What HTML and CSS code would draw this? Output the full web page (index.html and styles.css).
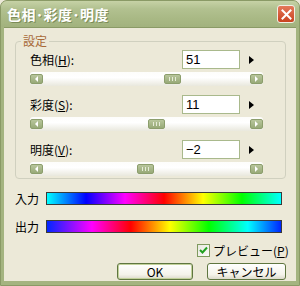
FILE: index.html
```html
<!DOCTYPE html>
<html lang="ja">
<head>
    <meta charset="UTF-8">
    <title>色相･彩度･明度</title>
    <link rel="stylesheet" href="styles.css">
</head>
<body>
<div class="window">
    <div class="titlebar">
        <span class="title">色相･彩度･明度</span>
        <span class="close-btn">
            <svg width="11" height="11" viewBox="0 0 11 11"><path d="M1.5 1.5 L9.5 9.5 M9.5 1.5 L1.5 9.5" stroke="#fff" stroke-width="2" stroke-linecap="square"/></svg>
        </span>
    </div>
    <div class="client">
        <fieldset class="group">
            <legend>設定</legend>

            <div class="setting">
                <div class="setting-row">
                    <span class="setting-label">色相(<u>H</u>):</span>
                    <input class="value" type="text" value="51">
                    <span class="spin-arrow"></span>
                </div>
                <div class="slider">
                    <span class="sl-btn sl-left"></span>
                    <span class="sl-thumb" style="left: 134px"></span>
                    <span class="sl-btn sl-right"></span>
                </div>
            </div>

            <div class="setting">
                <div class="setting-row">
                    <span class="setting-label">彩度(<u>S</u>):</span>
                    <input class="value" type="text" value="11">
                    <span class="spin-arrow"></span>
                </div>
                <div class="slider">
                    <span class="sl-btn sl-left"></span>
                    <span class="sl-thumb" style="left: 118px"></span>
                    <span class="sl-btn sl-right"></span>
                </div>
            </div>

            <div class="setting">
                <div class="setting-row">
                    <span class="setting-label">明度(<u>V</u>):</span>
                    <input class="value" type="text" value="−2">
                    <span class="spin-arrow"></span>
                </div>
                <div class="slider">
                    <span class="sl-btn sl-left"></span>
                    <span class="sl-thumb" style="left: 107px"></span>
                    <span class="sl-btn sl-right"></span>
                </div>
            </div>
        </fieldset>

        <div class="hue-row">
            <span class="hue-label">入力</span>
            <div class="hue-bar hue-in"></div>
        </div>
        <div class="hue-row">
            <span class="hue-label">出力</span>
            <div class="hue-bar hue-out"></div>
        </div>

        <label class="check-row">
            <span class="checkbox">
                <svg width="9" height="9" viewBox="0 0 9 9"><path d="M1 4 L3.5 6.5 L8 1.5" fill="none" stroke="#21a121" stroke-width="2"/></svg>
            </span>
            <span class="check-text">プレビュー(<u>P</u>)</span>
        </label>

        <div class="buttons">
            <button class="btn btn-default">OK</button>
            <button class="btn btn-cancel">キャンセル</button>
        </div>
    </div>
</div>
</body>
</html>
```

FILE: styles.css
```css
body {
    margin: 0;
    padding: 0;
    background: #ece9d8;
    font-family: "Noto Sans CJK JP", "DejaVu Sans", sans-serif;
    font-size: 12px;
    color: #000;
}
.window {
    width: 300px;
    height: 286px;
    display: flex;
    flex-direction: column;
    background: #a4b480;
    border-radius: 7px 7px 0 0;
    box-sizing: border-box;
    border: 1px solid #8a9a66;
}
.titlebar {
    height: 26px;
    flex-shrink: 0;
    display: flex;
    align-items: center;
    justify-content: space-between;
    padding: 0 4px 0 6px;
    background: linear-gradient(180deg, #c6d2a6 0%, #b2c190 30%, #a8b884 70%, #a2b27e 100%);
    border-radius: 6px 6px 0 0;
}
.title {
    color: #fff;
    font-weight: bold;
    font-size: 14px;
    letter-spacing: 0.5px;
    text-shadow: 1px 1px 0 #7c8c58;
}
.close-btn {
    width: 16px;
    height: 16px;
    display: flex;
    align-items: center;
    justify-content: center;
    background: linear-gradient(180deg, #e4795a, #c9421f);
    border: 1px solid #f2efe6;
    border-radius: 3px;
}
.client {
    flex: 1;
    margin: 0 3px 4px 3px;
    background: #ece9d8;
    padding: 6px 10px 0 11px;
    border-top: 1px solid #8a9a66;
}
.group {
    margin: 0;
    border: 1px solid #d0d0bf;
    border-radius: 4px;
    padding: 2px 22px 2px 14px;
}
.group legend {
    color: #a86a38;
    padding: 0 2px;
    margin-left: -9px;
    line-height: 14px;
}
.setting + .setting {
    margin-top: 9px;
}
.setting-row {
    display: flex;
    align-items: center;
    height: 19px;
}
.setting-label {
    flex: 1;
}
.value {
    width: 58px;
    height: 19px;
    box-sizing: border-box;
    border: 1px solid #a9b98c;
    padding: 0 3px;
    font-family: "Liberation Sans", sans-serif;
    font-size: 13px;
    background: #fff;
}
.spin-arrow {
    width: 23px;
    display: flex;
    justify-content: center;
}
.spin-arrow::before {
    content: "";
    border-left: 5px solid #000;
    border-top: 4px solid transparent;
    border-bottom: 4px solid transparent;
}
.slider {
    position: relative;
    margin-top: 3px;
    height: 14px;
    display: flex;
    align-items: center;
    justify-content: space-between;
    border-radius: 3px;
    background: linear-gradient(180deg, #fdfdfb 0%, #ffffff 40%, #e9e8dd 100%);
}
.sl-btn, .sl-thumb {
    width: 13px;
    height: 10px;
    box-sizing: border-box;
    border: 1px solid #8c9e6c;
    border-radius: 2px;
    background: linear-gradient(180deg, #b8c69c, #98aa78);
    display: flex;
    align-items: center;
    justify-content: center;
}
.sl-left::before {
    content: "";
    border-right: 3px solid #fff;
    border-top: 3px solid transparent;
    border-bottom: 3px solid transparent;
}
.sl-right::before {
    content: "";
    border-left: 3px solid #fff;
    border-top: 3px solid transparent;
    border-bottom: 3px solid transparent;
}
.sl-thumb {
    position: absolute;
    top: 2px;
    width: 17px;
}
.sl-thumb::before {
    content: "";
    width: 5px;
    height: 4px;
    border-left: 1px solid #e6ecd8;
    border-right: 1px solid #e6ecd8;
    background: linear-gradient(90deg, transparent 2px, #e6ecd8 2px, #e6ecd8 3px, transparent 3px);
}
.hue-row {
    display: flex;
    align-items: center;
    margin-top: 11px;
    margin-right: 4px;
}
.hue-label {
    width: 31px;
}
.hue-bar {
    flex: 1;
    height: 13px;
    box-sizing: border-box;
    border: 1px solid #3a3a3a;
}
.hue-in {
    background: linear-gradient(90deg, #00ffff, #0000ff 16.7%, #ff00ff 33.3%, #ff0000 50%, #ffff00 66.7%, #00ff00 83.3%, #00ffff);
}
.hue-out {
    background: linear-gradient(90deg, #0026ff, #ff00ff 19.2%, #ff0000 35.8%, #ffff00 52.5%, #00ff00 69.2%, #00ffff 85.8%, #0026ff);
}
.check-row {
    display: flex;
    align-items: center;
    gap: 3px;
    margin-top: 9px;
    margin-left: 182px;
    height: 13px;
}
.check-text {
    white-space: nowrap;
    line-height: 13px;
}
.checkbox {
    flex-shrink: 0;
    width: 13px;
    height: 13px;
    box-sizing: border-box;
    border: 1px solid #7f9a5e;
    background: linear-gradient(135deg, #e8e8e0, #fbfbf8);
    display: flex;
    align-items: center;
    justify-content: center;
}
.buttons {
    display: flex;
    justify-content: flex-end;
    gap: 14px;
    margin-top: 6px;
}
.btn {
    height: 17px;
    padding: 0;
    box-sizing: border-box;
    border: 1px solid #5f7640;
    border-radius: 3px;
    background: linear-gradient(180deg, #ffffff, #f4f3ea 70%, #dcdacb);
    font-family: "Noto Sans CJK JP", sans-serif;
    font-size: 12px;
    line-height: 13px;
    color: #000;
}
.btn-default {
    width: 76px;
    box-shadow: inset 0 0 0 1px #c2d19a;
}
.btn-cancel {
    width: 79px;
}
```
